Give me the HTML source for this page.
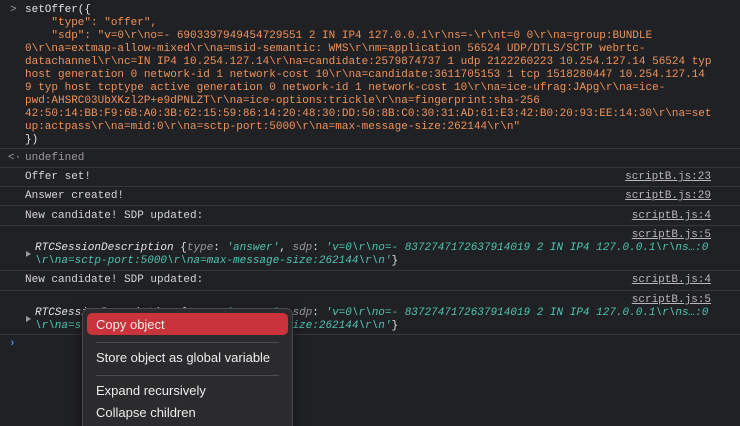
<!DOCTYPE html>
<html><head><meta charset="utf-8"><style>
html,body{margin:0;padding:0;background:#202124;width:740px;height:426px;overflow:hidden}
body{font-family:"Liberation Mono",monospace;font-size:11px;color:#d6d6d6;position:relative}
.l{position:absolute;left:25px;white-space:pre;line-height:13px}
.o{color:#f0925a}
.sep{position:absolute;left:0;width:740px;height:1px;background:#36363a}
.lnk{position:absolute;right:29px;white-space:pre;color:#b8b8b8;text-decoration:underline;line-height:13px}
.t{color:#4fc4b2;font-style:italic}
.k{color:#9a9a9a}
.w{color:#e3e3e3}
.tri{position:absolute;left:26px;width:0;height:0;border-left:5px solid #9a9a9a;border-top:3.5px solid transparent;border-bottom:3.5px solid transparent}
.menu{position:absolute;left:82px;top:308px;width:209px;height:130px;background:#2b2b2d;border:1px solid #4a4a4c;border-radius:7px;font-family:"Liberation Sans",sans-serif;font-size:13px;color:#ececec;box-shadow:0 4px 14px rgba(0,0,0,.5)}
.mi{position:absolute;left:13px;white-space:pre}
.ms{position:absolute;left:13px;right:13px;height:1px;background:#4d4d4f}
</style></head><body>
<div class="l" style="left:10px;top:4px;color:#9a9a9a">&gt;</div>
<div class="l w" style="top:4px">setOffer({</div>
<div class="l o" style="top:17px">    "type": "offer",</div>
<div class="l o" style="top:30px">    "sdp": "v=0\r\no=- 6903397949454729551 2 IN IP4 127.0.0.1\r\ns=-\r\nt=0 0\r\na=group:BUNDLE</div>
<div class="l o" style="top:43px">0\r\na=extmap-allow-mixed\r\na=msid-semantic: WMS\r\nm=application 56524 UDP/DTLS/SCTP webrtc-</div>
<div class="l o" style="top:56px">datachannel\r\nc=IN IP4 10.254.127.14\r\na=candidate:2579874737 1 udp 2122260223 10.254.127.14 56524 typ</div>
<div class="l o" style="top:69px">host generation 0 network-id 1 network-cost 10\r\na=candidate:3611705153 1 tcp 1518280447 10.254.127.14</div>
<div class="l o" style="top:82px">9 typ host tcptype active generation 0 network-id 1 network-cost 10\r\na=ice-ufrag:JApg\r\na=ice-</div>
<div class="l o" style="top:95px">pwd:AHSRC03UbXKzl2P+e9dPNLZT\r\na=ice-options:trickle\r\na=fingerprint:sha-256</div>
<div class="l o" style="top:108px">42:50:14:BB:F9:6B:A0:3B:62:15:59:86:14:20:48:30:DD:50:8B:C0:30:31:AD:61:E3:42:B0:20:93:EE:14:30\r\na=set</div>
<div class="l o" style="top:121px">up:actpass\r\na=mid:0\r\na=sctp-port:5000\r\na=max-message-size:262144\r\n"</div>
<div class="l w" style="top:134px">})</div>
<div class="sep" style="top:148px"></div>
<div class="l" style="left:8px;top:152px;color:#9a9a9a">&lt;·</div>
<div class="l" style="top:152px;color:#9a9a9a">undefined</div>
<div class="sep" style="top:167px"></div>
<div class="l" style="top:171px">Offer set!</div><div class="lnk" style="top:171px">scriptB.js:23</div>
<div class="sep" style="top:186px"></div>
<div class="l" style="top:190px">Answer created!</div><div class="lnk" style="top:190px">scriptB.js:29</div>
<div class="sep" style="top:205px"></div>
<div class="l" style="top:210px">New candidate! SDP updated:</div><div class="lnk" style="top:210px">scriptB.js:4</div>
<div class="sep" style="top:225px"></div>
<div class="lnk" style="top:229px">scriptB.js:5</div>
<div class="tri" style="top:251px"></div>
<div class="l" style="left:35px;top:242px"><span class="t w">RTCSessionDescription</span> <span class="w">{</span><span class="k" style="font-style:italic">type</span><span class="w">: </span><span class="t">'answer'</span><span class="w">, </span><span class="k" style="font-style:italic">sdp</span><span class="w">: </span><span class="t">'v=0\r\no=- 8372747172637914019 2 IN IP4 127.0.0.1\r\ns…:0</span></div>
<div class="l t" style="left:35px;top:255px">\r\na=sctp-port:5000\r\na=max-message-size:262144\r\n'<span class="w" style="font-style:normal">}</span></div>
<div class="sep" style="top:270px"></div>
<div class="l" style="top:274px">New candidate! SDP updated:</div><div class="lnk" style="top:274px">scriptB.js:4</div>
<div class="sep" style="top:290px"></div>
<div class="lnk" style="top:294px">scriptB.js:5</div>
<div class="tri" style="top:316px"></div>
<div class="l" style="left:35px;top:307px"><span class="t w">RTCSessionDescription</span> <span class="w">{</span><span class="k" style="font-style:italic">type</span><span class="w">: </span><span class="t">'answer'</span><span class="w">, </span><span class="k" style="font-style:italic">sdp</span><span class="w">: </span><span class="t">'v=0\r\no=- 8372747172637914019 2 IN IP4 127.0.0.1\r\ns…:0</span></div>
<div class="l t" style="left:35px;top:320px">\r\na=sctp-port:5000\r\na=max-message-size:262144\r\n'<span class="w" style="font-style:normal">}</span></div>
<div class="sep" style="top:334px"></div>
<div class="l" style="left:9px;top:338px;color:#4a8ee6;font-weight:bold">›</div>
<div class="menu">
<div style="position:absolute;left:4px;right:4px;top:4px;height:22px;background:#c9343c;border-radius:5px"></div>
<div class="mi" style="top:8px">Copy object</div>
<div class="ms" style="top:33px"></div>
<div class="mi" style="top:41px">Store object as global variable</div>
<div class="ms" style="top:66px"></div>
<div class="mi" style="top:74px">Expand recursively</div>
<div class="mi" style="top:96px">Collapse children</div>
</div>
</body></html>
